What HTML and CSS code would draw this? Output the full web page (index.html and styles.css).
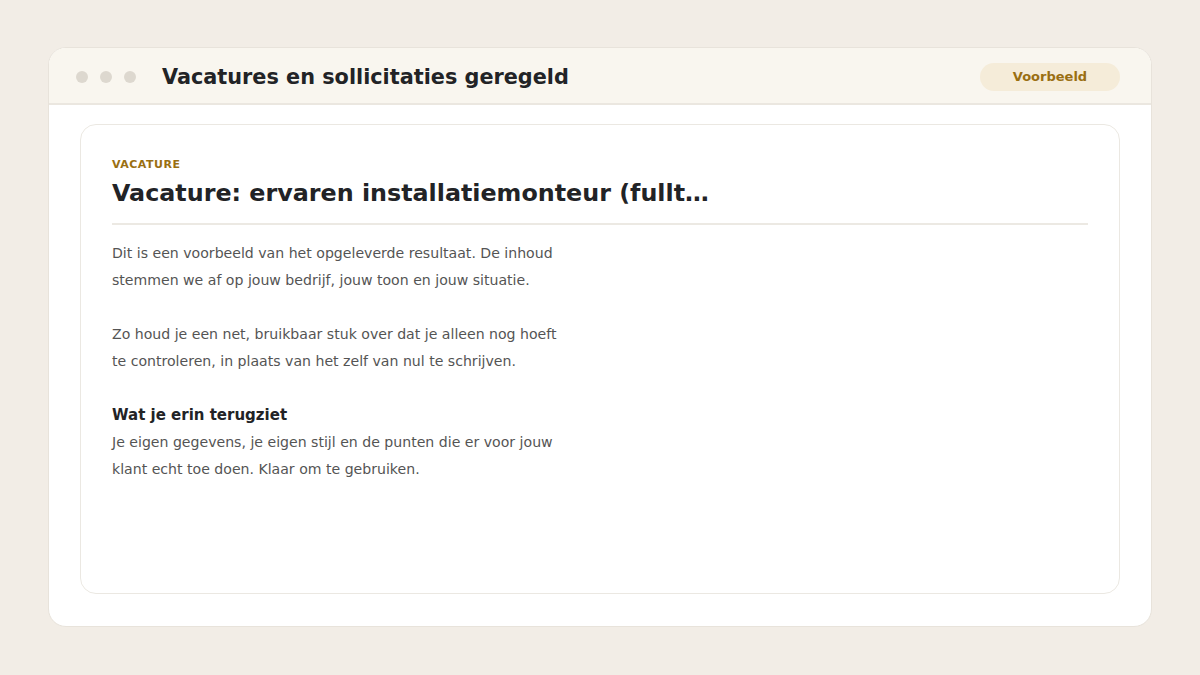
FILE: index.html
```html
<!DOCTYPE html>
<html lang="nl">
<head>
    <meta charset="UTF-8">
    <meta name="viewport" content="width=device-width, initial-scale=1.0">
    <title>Vacatures en sollicitaties geregeld</title>
    <link rel="stylesheet" href="styles.css">
</head>
<body>
    <div class="window">
        <div class="window-bar">
            <div class="dots">
                <span class="dot"></span>
                <span class="dot"></span>
                <span class="dot"></span>
            </div>
            <h1 class="window-title">Vacatures en sollicitaties geregeld</h1>
            <span class="badge">Voorbeeld</span>
        </div>
        <div class="window-body">
            <div class="doc">
                <div class="doc-head">
                    <div class="doc-label">VACATURE</div>
                    <h2 class="doc-title">Vacature: ervaren installatiemonteur (fullt…</h2>
                </div>
                <div class="doc-text">
                    <p>Dit is een voorbeeld van het opgeleverde resultaat. De inhoud stemmen we af op jouw bedrijf, jouw toon en jouw situatie.</p>
                    <p>Zo houd je een net, bruikbaar stuk over dat je alleen nog hoeft te controleren, in plaats van het zelf van nul te schrijven.</p>
                    <h3>Wat je erin terugziet</h3>
                    <p>Je eigen gegevens, je eigen stijl en de punten die er voor jouw klant echt toe doen. Klaar om te gebruiken.</p>
                </div>
            </div>
        </div>
    </div>
</body>
</html>
```

FILE: styles.css
```css
body {
    font-family: 'DejaVu Sans', sans-serif;
    background: #f2ede6;
    margin: 0;
    padding: 47px 48px;
}

.window {
    background: #fff;
    border: 1px solid #e8e3db;
    border-radius: 18px;
    overflow: hidden;
    height: 578px;
    display: flex;
    flex-direction: column;
}

.window-bar {
    background: #f9f6ef;
    border-bottom: 2px solid #ebe7e0;
    display: flex;
    align-items: center;
    padding: 2px 31px 0 27px;
    box-sizing: border-box;
    height: 57px;
}

.dots {
    display: flex;
    gap: 12px;
    margin-right: 26px;
}

.dot {
    width: 12px;
    height: 12px;
    border-radius: 50%;
    background: #ddd8cf;
}

.window-title {
    flex: 1;
    margin: 0;
    font-size: 20.8px;
    font-weight: bold;
    color: #222326;
}

.badge {
    width: 140px;
    height: 28px;
    line-height: 28px;
    text-align: center;
    border-radius: 14px;
    background: #f5ecd9;
    color: #9a6f12;
    font-size: 13px;
    font-weight: bold;
}

.window-body {
    flex: 1;
    padding: 19px 31px 32px 31px;
    display: flex;
}

.doc {
    flex: 1;
    border: 1px solid #ebe8e2;
    border-radius: 16px;
    padding: 33px 31px;
}

.doc-head {
    padding-bottom: 16px;
    border-bottom: 2px solid #ece9e3;
}

.doc-label {
    font-size: 11px;
    font-weight: bold;
    letter-spacing: 0.5px;
    color: #9a6f12;
}

.doc-title {
    margin: 8px 0 0;
    font-size: 23.8px;
    font-weight: bold;
    color: #222326;
    white-space: nowrap;
}

.doc-text {
    margin-top: 15px;
    max-width: 456px;
    font-size: 14.1px;
    line-height: 27px;
    color: #545454;
}

.doc-text p {
    margin: 0 0 27px;
}

.doc-text h3 {
    margin: 0;
    font-size: 15px;
    line-height: 27px;
    color: #222326;
}
```
